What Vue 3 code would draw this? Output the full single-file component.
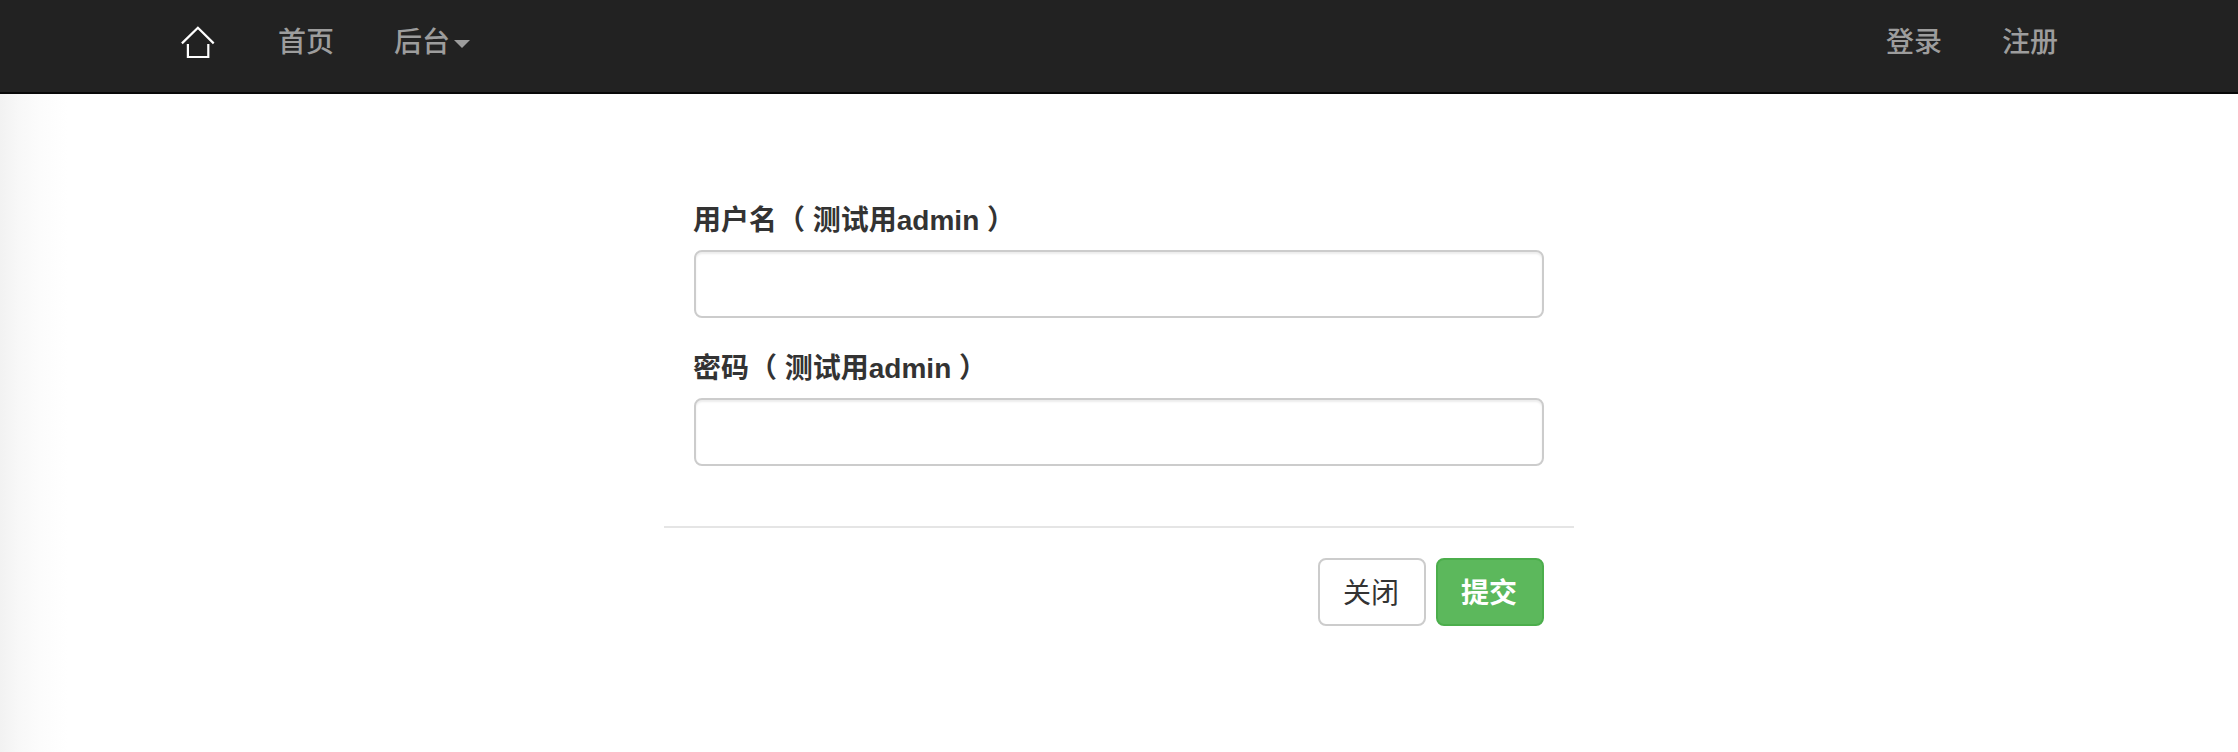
<script setup>
import { ref } from 'vue'

const leftLinks = [
  { label: '首页', menu: false },
  { label: '后台', menu: true },
]
const rightLinks = ['登录', '注册']
const fields = [
  { id: 'username', label: '用户名（ 测试用admin ）', type: 'text' },
  { id: 'password', label: '密码（ 测试用admin ）', type: 'password' },
]
const values = ref({ username: '', password: '' })
</script>

<template>
  <div class="page">
    <nav class="navbar">
      <div class="container">
        <a class="brand">
          <svg width="34" height="34" viewBox="0 0 34 34" fill="none" stroke="#fff" stroke-width="2.2">
            <path d="M.9 18.4 16.9 2.7 32.7 18.4" />
            <path d="M6.9 19V32H27.3V19" />
          </svg>
        </a>
        <a v-for="link in leftLinks" :key="link.label" class="link">
          <span>{{ link.label }}</span>
          <i v-if="link.menu" class="caret"></i>
        </a>
        <div class="right">
          <a v-for="label in rightLinks" :key="label" class="link"><span>{{ label }}</span></a>
        </div>
      </div>
    </nav>
    <main class="content">
      <form class="dialog" @submit.prevent>
        <div class="body">
          <div v-for="field in fields" :key="field.id" class="group">
            <label :for="field.id">{{ field.label }}</label>
            <input :id="field.id" v-model="values[field.id]" :type="field.type" />
          </div>
        </div>
        <div class="footer">
          <button type="button" class="btn">关闭</button>
          <button type="submit" class="btn success">提交</button>
        </div>
      </form>
    </main>
  </div>
</template>

<style>
body {
  margin: 0;
}
</style>

<style scoped>
.page {
  box-sizing: border-box;
  height: 752px;
  display: flex;
  flex-direction: column;
  font: 28px/40px "Liberation Sans", "Noto Sans CJK SC", sans-serif;
  color: #333;
  background: #fff;
}
.navbar {
  box-sizing: border-box;
  flex: none;
  height: 94px;
  background: #222;
  border-bottom: 2px solid #080808;
}
.container {
  display: flex;
  width: 1938px;
  margin: 0 auto;
}
.brand {
  display: flex;
  padding: 25px 33px 0 31px;
}
.brand svg {
  display: block;
}
.link {
  display: flex;
  padding: 23px 30px 21px;
  color: #9d9d9d;
  font-weight: 500;
}
.caret {
  margin: 17px 0 0 4px;
  width: 0;
  height: 0;
  border: 8px solid transparent;
  border-top-color: #9d9d9d;
  border-bottom: 0;
}
.right {
  display: flex;
  margin-left: auto;
}
.content {
  flex: 1;
  background: linear-gradient(to right, #f2f2f2 0, #f8f8f8 20px, #fcfcfc 40px, #fff 68px);
}
.dialog {
  width: 910px;
  margin: 0 auto;
  padding-top: 76px;
}
.body {
  padding: 30px;
}
.group {
  display: flex;
  flex-direction: column;
  margin-bottom: 30px;
}
label {
  margin: 1px 0 9px -1px;
  font-weight: 700;
}
input {
  box-sizing: border-box;
  width: 100%;
  height: 68px;
  padding: 12px 24px;
  border: 2px solid #ccc;
  border-radius: 8px;
  background: #fff;
  font: inherit;
  color: #555;
  outline: none;
  box-shadow: inset 0 2px 2px rgba(0, 0, 0, 0.075);
}
.footer {
  display: flex;
  justify-content: flex-end;
  gap: 10px;
  padding: 30px;
  border-top: 2px solid #e5e5e5;
}
.btn {
  box-sizing: border-box;
  width: 108px;
  height: 68px;
  padding: 14px 2px 10px 0;
  border: 2px solid #ccc;
  border-radius: 8px;
  background: #fff;
  color: #333;
  font: inherit;
}
.success {
  border-color: #4cae4c;
  background: #5cb85c;
  color: #fff;
  font-weight: 700;
}
</style>
